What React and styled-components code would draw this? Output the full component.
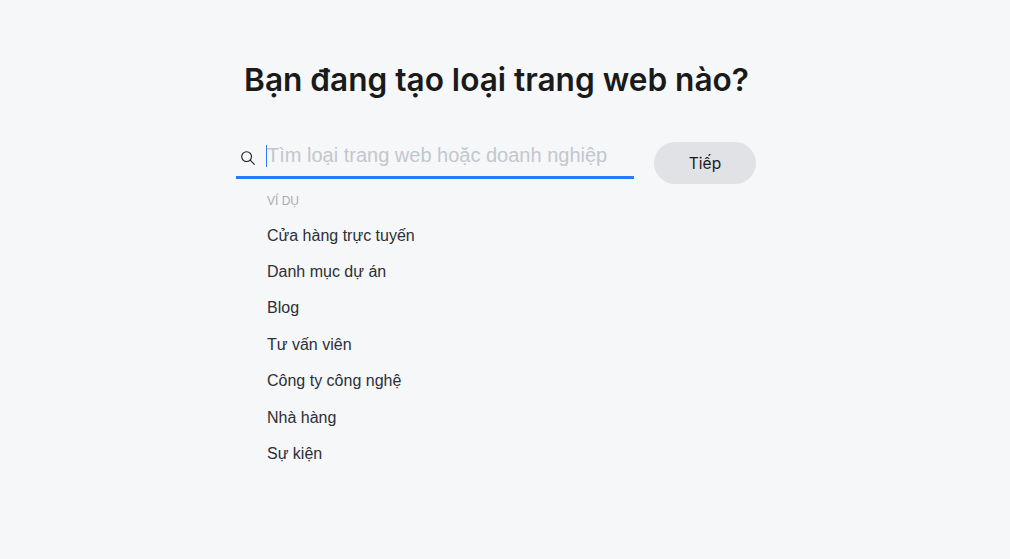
import React from 'react'
import styled, { createGlobalStyle } from 'styled-components'

const examples = [
  'Cửa hàng trực tuyến',
  'Danh mục dự án',
  'Blog',
  'Tư vấn viên',
  'Công ty công nghệ',
  'Nhà hàng',
  'Sự kiện',
]

const GlobalStyle = createGlobalStyle`
  html, body {
    margin: 0;
    padding: 0;
    background: #f5f7f9;
  }
  * {
    box-sizing: border-box;
  }
`

const Page = styled.div`
  height: 559px;
  overflow: hidden;
  display: flex;
  flex-direction: column;
  align-items: center;
  background: #f5f7f9;
  font-family: "Liberation Sans", Arial, sans-serif;
`

const Title = styled.h1`
  margin: 60px 0 0 -17px;
  font-family: Inter, "Noto Sans", sans-serif;
  font-size: 31.6px;
  line-height: 40px;
  font-weight: 600;
  white-space: nowrap;
  color: #1a1a1a;
`

const Form = styled.div`
  display: flex;
  align-items: flex-start;
  gap: 20px;
  width: 520px;
  margin: 42px 0 0 -18px;
`

const Column = styled.div`
  width: 398px;
`

const SearchBar = styled.div`
  display: flex;
  align-items: center;
  height: 37px;
  border-bottom: 3px solid #2979ff;
`

const IconWrap = styled.span`
  display: flex;
  width: 31px;
  padding-left: 5px;
  margin-top: -3px;
`

const InputWrap = styled.div`
  position: relative;
  flex: 1;
  min-width: 0;
  margin-top: -7px;
`

const Input = styled.input`
  display: block;
  width: 100%;
  height: 26px;
  padding: 0;
  border: 0;
  outline: 0;
  background: transparent;
  font-family: inherit;
  font-size: 20px;
  color: #162d3d;
  caret-color: transparent;

  &::placeholder {
    color: #c2c7ce;
    opacity: 1;
  }
`

const Caret = styled.span`
  position: absolute;
  left: -1px;
  top: 2px;
  width: 1px;
  height: 22px;
  background: #2979ff;
`

const NextButton = styled.button`
  width: 102px;
  height: 42px;
  border: 0;
  border-radius: 21px;
  background: #e0e2e5;
  font-family: Inter, "Noto Sans", sans-serif;
  font-size: 15.5px;
  color: #1a1a1a;
`

const Suggestions = styled.div`
  padding: 14px 0 0 31px;
`

const Caption = styled.div`
  font-size: 12px;
  line-height: 16px;
  color: #a8adb4;
  margin-bottom: 8.7px;
`

const Option = styled.div`
  height: 36.4px;
  line-height: 36.4px;
  font-size: 16px;
  color: #2b2f36;
`

function SearchIcon() {
  return (
    <svg width="14" height="14" viewBox="0 0 14 14" fill="none" stroke="#1a1a1a" strokeWidth="1.1">
      <circle cx="5.6" cy="5.6" r="4.9" />
      <path d="M9.2 9.2 13.6 13.6" />
    </svg>
  )
}

export default function App() {
  return (
    <Page>
      <GlobalStyle />
      <Title>Bạn đang tạo loại trang web nào?</Title>
      <Form>
        <Column>
          <SearchBar>
            <IconWrap><SearchIcon /></IconWrap>
            <InputWrap>
              <Input placeholder="Tìm loại trang web hoặc doanh nghiệp" />
              <Caret />
            </InputWrap>
          </SearchBar>
          <Suggestions>
            <Caption>VÍ DỤ</Caption>
            {examples.map((item) => (
              <Option key={item}>{item}</Option>
            ))}
          </Suggestions>
        </Column>
        <NextButton>Tiếp</NextButton>
      </Form>
    </Page>
  )
}
